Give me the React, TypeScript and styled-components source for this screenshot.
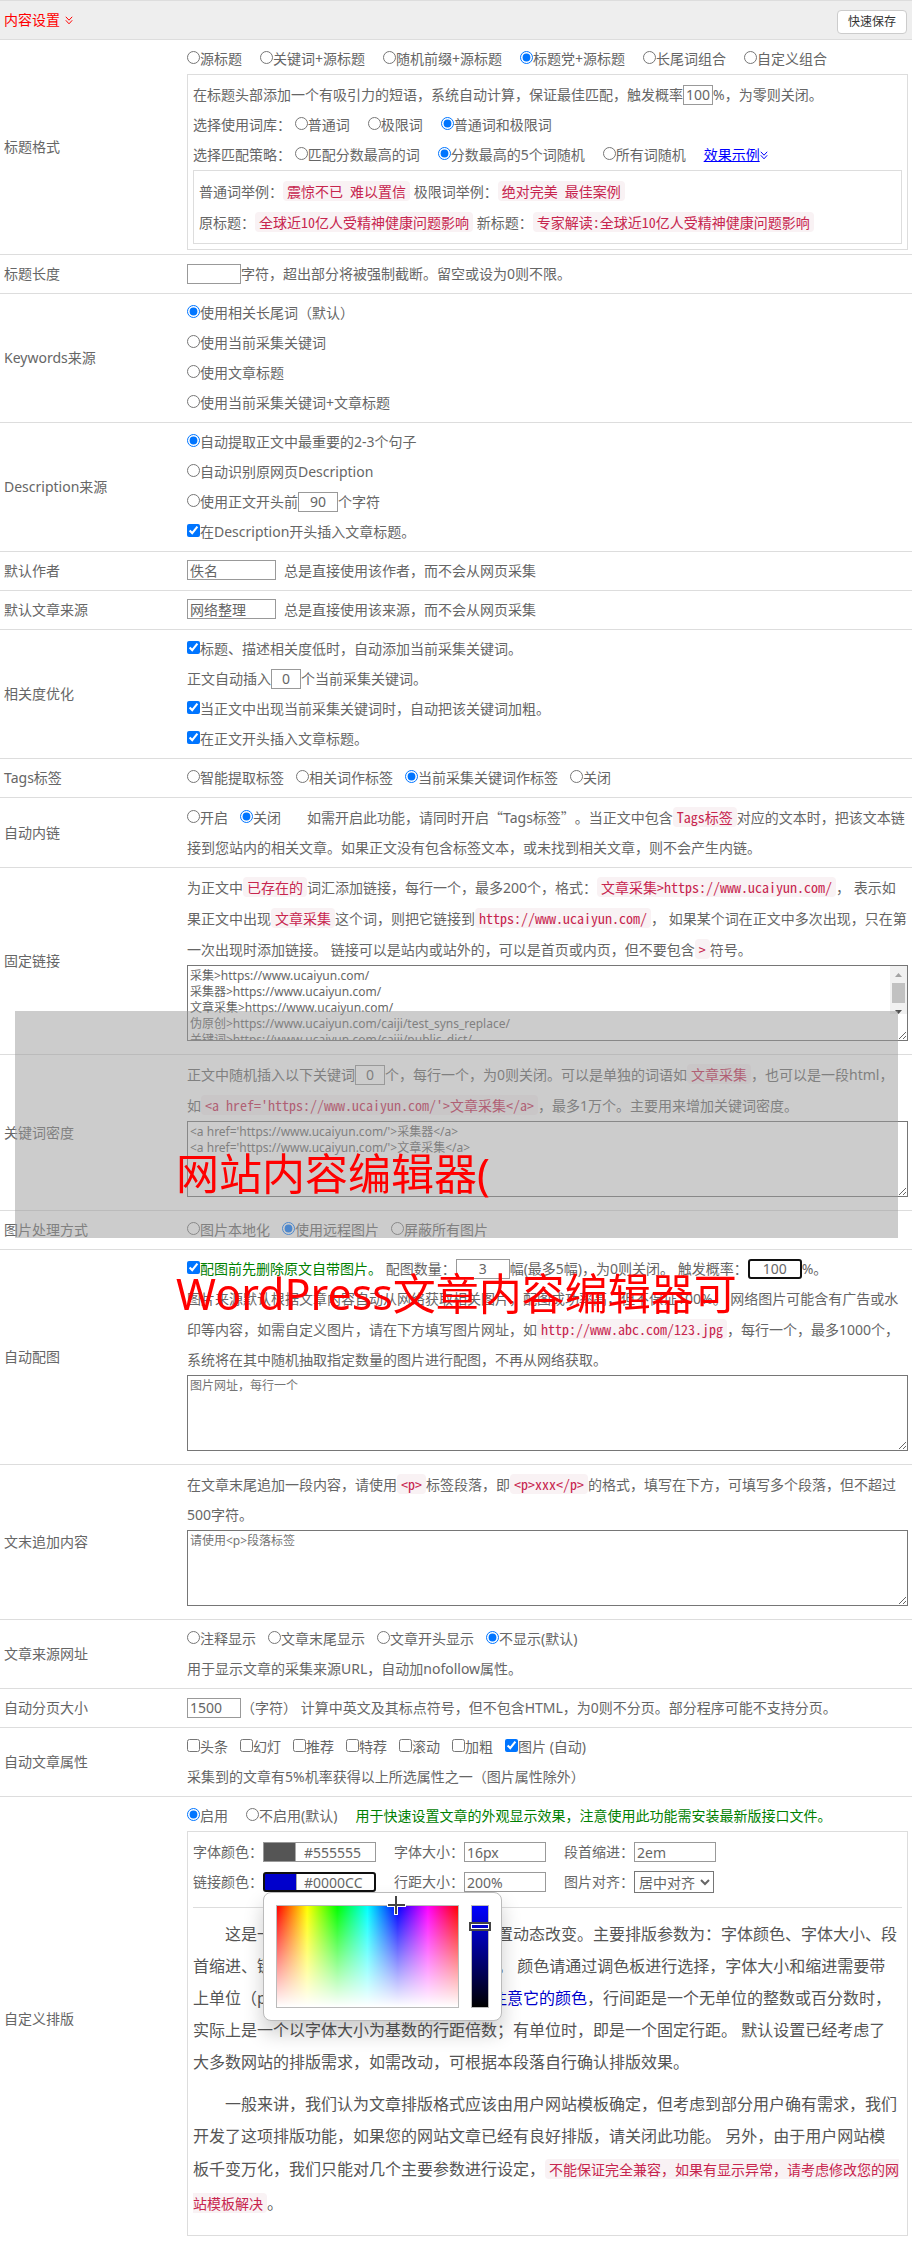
import React, { useId } from 'react';
import styled, { createGlobalStyle, css } from 'styled-components';

const sans = `'Noto Sans', 'Noto Sans CJK SC', sans-serif`;
const mono = `'Noto Sans Mono CJK SC', 'Liberation Mono', 'Noto Sans CJK SC', monospace`;

const GlobalStyle = createGlobalStyle`
  body {
    margin: 0;
    background: #fff;
    color: #666;
    font-family: ${sans};
    font-size: 14px;
    line-height: 30px;
    text-spacing-trim: space-all;
  }
  input, select, button, textarea { font-family: inherit; color: inherit; }
`;

const Page = styled.main`
  position: relative;
  padding-bottom: 10px;
`;

const Header = styled.header`
  display: flex;
  align-items: center;
  justify-content: space-between;
  height: 38px;
  padding: 0 5px 0 4px;
  background: #eee;
  border-top: 1px solid #ddd;
  border-bottom: 1px solid #ddd;
`;

const Title = styled.h1`
  display: flex;
  align-items: center;
  gap: 5px;
  margin: 0;
  font-size: 14px;
  font-weight: 400;
  color: #f00;
`;

const SaveButton = styled.button`
  height: 24px;
  padding: 0 10px;
  margin-top: 4px;
  border: 1px solid #ccc;
  border-radius: 4px;
  background: #fff;
  color: #333;
  font-size: 12px;
  line-height: 22px;
`;

const Row = styled.section<{ $last?: boolean }>`
  display: grid;
  grid-template-columns: 183px minmax(0, 1fr);
  align-items: center;
  padding: 4px 4px 4px 4px;
  border-bottom: ${(p) => (p.$last ? 0 : 1)}px solid #ddd;
`;

const RowName = styled.h2`
  margin: 0;
  font-size: 14px;
  font-weight: 400;
`;

const Line = styled.div``;

const Options = styled.span<{ $gap?: number }>`
  display: inline-flex;
  align-items: baseline;
  gap: ${(p) => p.$gap ?? 12}px;
  margin-right: ${(p) => p.$gap ?? 12}px;
`;

const Tick = styled.input`
  width: 13px;
  height: 13px;
  margin: 0;
  vertical-align: baseline;
`;

const Field = styled.input<{ $w: number; $center?: boolean; $focus?: boolean }>`
  box-sizing: border-box;
  width: ${(p) => p.$w}px;
  height: 20px;
  padding: 0 2px;
  border: 1px solid #999;
  border-radius: 0;
  background: #fff;
  font-size: 14px;
  line-height: 18px;
  text-align: ${(p) => (p.$center ? 'center' : 'left')};
  ${(p) => p.$focus && css`
    border: 2px solid #101010;
    border-radius: 3px;
  `}
`;

const ColorInput = styled(Field)<{ $color: string }>`
  padding-left: ${(p) => (p.$focus ? 39 : 40)}px;
  background: linear-gradient(to right, ${(p) => p.$color} 31px, #aaa 31px, #aaa 32px, #fff 32px);
`;

const Select = styled.select`
  box-sizing: border-box;
  width: 80px;
  height: 22px;
  padding: 0;
  border: 1px solid #767676;
  border-radius: 0;
  background: #fff;
  font-size: 14px;
`;

const Area = styled.textarea<{ $scroll?: boolean }>`
  display: block;
  box-sizing: border-box;
  width: 100%;
  height: 76px;
  margin: 0 0 9px;
  padding: 2px;
  border: 1px solid #767676;
  border-radius: 0;
  background: #fff;
  font-size: 12px;
  line-height: 16px;
  overflow-y: ${(p) => (p.$scroll ? 'scroll' : 'auto')};
  &::placeholder { color: #757575; }
`;

const ScrollFrame = styled.div`
  position: relative;
`;

const ScrollBar = styled.div`
  position: absolute;
  top: 1px;
  right: 1px;
  bottom: 27px;
  display: flex;
  flex-direction: column;
  align-items: center;
  width: 17px;
  background: #f1f1f1;
  pointer-events: none;
`;

const ScrollArrow = styled.svg`
  flex: none;
  width: 17px;
  height: 17px;
`;

const ScrollTrack = styled.div`
  flex: 1;
  width: 13px;
`;

const ScrollThumb = styled.div`
  height: 20px;
  background: #c1c1c1;
`;

const Code = styled.code`
  padding: 0 4px;
  border-radius: 4px;
  background: #f9f2f4;
  color: #c7254e;
  font-family: ${mono};
  font-size: 14px;
`;

const Keep = styled.span`
  white-space: nowrap;
`;

const WideQuotes = styled.q`
  quotes: '“' '”';
  &::before, &::after { font-family: 'Noto Sans CJK SC', sans-serif; }
`;

const Panel = styled.div`
  padding: 5px;
  border: 1px solid #ddd;
`;

const Link = styled.a`
  color: #00f;
`;

const Green = styled.span`
  color: #008000;
`;

const Gap = styled.span<{ $w: number }>`
  display: inline-block;
  width: ${(p) => p.$w}px;
`;

const StyleGrid = styled.div`
  display: grid;
  grid-template-columns: max-content max-content max-content;
  column-gap: 18px;
  padding-bottom: 10px;
  border-bottom: 1px solid #ddd;
  margin-bottom: 10px;
`;

const StyleCell = styled.div`
  display: flex;
  align-items: center;
  height: 30px;
`;

const Anchor = styled.span`
  position: relative;
  display: flex;
`;

const Sample = styled.p`
  margin: 0 0 10px;
  padding-right: 2px;
  color: #555;
  font-size: 16px;
  line-height: 32px;
  text-indent: 2em;

  ${Code} { line-height: 34px; }
`;

const SampleLink = styled.a`
  color: #0000cc;
  text-decoration: none;
`;

const Picker = styled.div`
  position: absolute;
  z-index: 1;
  top: 20px;
  left: 0;
  display: flex;
  gap: 12px;
  box-sizing: border-box;
  width: 239px;
  height: 129px;
  padding: 12px;
  border: 1px solid #bbb;
  border-radius: 8px;
  background: #fff;
  box-shadow: 0 12px 20px rgba(0, 0, 0, 0.2);
`;

const Hues = styled.div`
  position: relative;
  box-sizing: border-box;
  width: 183px;
  height: 103px;
  border: 1px solid #bbb;
  background:
    linear-gradient(to bottom, rgba(255, 255, 255, 0), #fff),
    linear-gradient(to right, #f00, #ff0, #0f0, #0ff, #00f, #f0f, #f00);
`;

const Shade = styled.div`
  position: relative;
  box-sizing: border-box;
  width: 18px;
  height: 103px;
  border: 1px solid #bbb;
  background: linear-gradient(to bottom, #00f, #000);
`;

const Cross = styled.svg`
  position: absolute;
  left: 110px;
  top: -10px;
`;

const Thumb = styled.div`
  position: absolute;
  left: -3px;
  top: 16px;
  box-sizing: border-box;
  width: 22px;
  height: 9px;
  border: 2px solid #444;
  box-shadow: inset 0 0 0 1px #fff;
`;

const Veil = styled.div`
  position: absolute;
  z-index: 2;
  top: 1011px;
  left: 15px;
  right: 14px;
  height: 227px;
  background: rgba(153, 153, 153, 0.5);
  pointer-events: none;
`;

const Caption = styled.p`
  position: absolute;
  z-index: 3;
  top: 1114px;
  left: 176px;
  margin: 0;
  color: #f00;
  font-size: 43px;
  line-height: 120px;
  white-space: nowrap;
  pointer-events: none;
`;

const Chevrons = () => (
  <svg width="8" height="9" viewBox="0 0 8 9" fill="none" stroke="currentColor" aria-hidden="true">
    <path d="M0.8 0.8 4 4.2 7.2 0.8M0.8 4.3 4 7.8 7.2 4.3" />
  </svg>
);

type TickProps = { type?: 'radio' | 'checkbox'; name?: string; on?: boolean; children: React.ReactNode };

const Choice = ({ type = 'radio', name, on, children }: TickProps) => (
  <label>
    <Tick type={type} name={name} defaultChecked={on} />
    {children}
  </label>
);

type ChoicesProps = { name: string; items: string[]; on: number; gap?: number };

const Choices = ({ name, items, on, gap }: ChoicesProps) => (
  <Options $gap={gap}>
    {items.map((item, i) => (
      <Choice key={item} name={name} on={i === on}>{item}</Choice>
    ))}
  </Options>
);

const Setting = ({ name, last, children }: { name: string; last?: boolean; children: React.ReactNode }) => {
  const id = useId();
  return (
    <Row $last={last} aria-labelledby={id}>
      <RowName id={id}>{name}</RowName>
      <div>{children}</div>
    </Row>
  );
};

const fixedLinks = `采集>https://www.ucaiyun.com/
采集器>https://www.ucaiyun.com/
文章采集>https://www.ucaiyun.com/
伪原创>https://www.ucaiyun.com/caiji/test_syns_replace/
关键词>https://www.ucaiyun.com/caiji/public_dict/
文章组合>https://www.ucaiyun.com/
网站采集>https://www.ucaiyun.com/`;

const densityWords = `<a href='https://www.ucaiyun.com/'>采集器</a>
<a href='https://www.ucaiyun.com/'>文章采集</a>`;

export default function App() {
  return (
    <Page>
      <GlobalStyle />
      <Header>
        <Title>内容设置 <Chevrons /></Title>
        <SaveButton type="button">快速保存</SaveButton>
      </Header>

      <Setting name="标题格式">
        <Line>
          <Choices name="title" gap={18} on={3}
            items={['源标题', '关键词+源标题', '随机前缀+源标题', '标题党+源标题', '长尾词组合', '自定义组合']} />
        </Line>
        <Panel>
          <Line>
            <label>在标题头部添加一个有吸引力的短语，系统自动计算，保证最佳匹配，触发概率<Field $w={30} $center defaultValue="100" /></label>%，为零则关闭。
          </Line>
          <Line>选择使用词库： <Choices name="lexicon" gap={18} on={2} items={['普通词', '极限词', '普通词和极限词']} /></Line>
          <Line>
            选择匹配策略： <Choices name="strategy" gap={18} on={1} items={['匹配分数最高的词', '分数最高的5个词随机', '所有词随机']} />
            <Link href="#example">效果示例<Chevrons /></Link>
          </Line>
          <Panel>
            <Line>普通词举例：<Code>震惊不已 难以置信</Code> 极限词举例：<Code>绝对完美 最佳案例</Code></Line>
            <Line>原标题：<Code>全球近10亿人受精神健康问题影响</Code> 新标题：<Code>专家解读:全球近10亿人受精神健康问题影响</Code></Line>
          </Panel>
        </Panel>
      </Setting>

      <Setting name="标题长度">
        <Line><label><Field $w={54} />字符，超出部分将被强制截断。留空或设为0则不限。</label></Line>
      </Setting>

      <Setting name="Keywords来源">
        <Line><Choice name="keywords" on>使用相关长尾词（默认）</Choice></Line>
        <Line><Choice name="keywords">使用当前采集关键词</Choice></Line>
        <Line><Choice name="keywords">使用文章标题</Choice></Line>
        <Line><Choice name="keywords">使用当前采集关键词+文章标题</Choice></Line>
      </Setting>

      <Setting name="Description来源">
        <Line><Choice name="description" on>自动提取正文中最重要的2-3个句子</Choice></Line>
        <Line><Choice name="description">自动识别原网页Description</Choice></Line>
        <Line><Choice name="description">使用正文开头前</Choice><label><Field $w={40} $center defaultValue="90" />个字符</label></Line>
        <Line><Choice type="checkbox" on>在Description开头插入文章标题。</Choice></Line>
      </Setting>

      <Setting name="默认作者">
        <Line><label><Field $w={89} defaultValue="佚名" /><Gap $w={8} />总是直接使用该作者，而不会从网页采集</label></Line>
      </Setting>

      <Setting name="默认文章来源">
        <Line><label><Field $w={89} defaultValue="网络整理" /><Gap $w={8} />总是直接使用该来源，而不会从网页采集</label></Line>
      </Setting>

      <Setting name="相关度优化">
        <Line><Choice type="checkbox" on>标题、描述相关度低时，自动添加当前采集关键词。</Choice></Line>
        <Line><label>正文自动插入<Field $w={30} $center defaultValue="0" />个当前采集关键词。</label></Line>
        <Line><Choice type="checkbox" on>当正文中出现当前采集关键词时，自动把该关键词加粗。</Choice></Line>
        <Line><Choice type="checkbox" on>在正文开头插入文章标题。</Choice></Line>
      </Setting>

      <Setting name="Tags标签">
        <Line><Choices name="tags" on={2} items={['智能提取标签', '相关词作标签', '当前采集关键词作标签', '关闭']} /></Line>
      </Setting>

      <Setting name="自动内链">
        <Line>
          <Choices name="inner-link" on={1} items={['开启', '关闭']} /><Gap $w={14} />如需开启此功能，请同时开启<WideQuotes>Tags标签</WideQuotes>。当正文中包含<Code>Tags标签</Code>对应的文本时，把该文本链接到您站内的相关文章。如果正文没有包含标签文本，或未找到相关文章，则不会产生内链。
        </Line>
      </Setting>

      <Setting name="固定链接">
        <Line>
          为正文中<Code>已存在的</Code>词汇添加链接，每行一个，最多200个，格式：<Code>文章采集&gt;https://www.ucaiyun.com/</Code>， 表示如果正文中出现<Code>文章采集</Code>这个词，则把它链接到<Code>https://www.ucaiyun.com/</Code>， 如果某个词在正文中多次出现，只在第一次出现时添加链接。 链接可以是站内或站外的，可以是首页或内页，但不要包含<Code>&gt;</Code>符号。
        </Line>
        <ScrollFrame>
          <Area $scroll aria-label="固定链接" defaultValue={fixedLinks} />
          <ScrollBar aria-hidden="true">
            <ScrollArrow viewBox="0 0 17 17"><path d="M5 11 8.5 7 12 11Z" fill="#a3a3a3" /></ScrollArrow>
            <ScrollTrack><ScrollThumb /></ScrollTrack>
            <ScrollArrow viewBox="0 0 17 17"><path d="M5 7 8.5 11 12 7Z" fill="#505050" /></ScrollArrow>
          </ScrollBar>
        </ScrollFrame>
      </Setting>

      <Setting name="关键词密度">
        <Line>
          正文中随机插入以下关键词<Field $w={30} $center aria-label="关键词数量" defaultValue="0" />个，每行一个，为0则关闭。可以是单独的词语如<Code>文章采集</Code>，也可以是一段html，<Keep>如<Code>&lt;a href='https://www.ucaiyun.com/'&gt;文章采集&lt;/a&gt;</Code></Keep>，最多1万个。主要用来增加关键词密度。
        </Line>
        <Area aria-label="关键词密度" defaultValue={densityWords} />
      </Setting>

      <Setting name="图片处理方式">
        <Line><Choices name="image" on={1} items={['图片本地化', '使用远程图片', '屏蔽所有图片']} /></Line>
      </Setting>

      <Setting name="自动配图">
        <Line>
          <Choice type="checkbox" on><Green>配图前先删除原文自带图片。</Green></Choice> <label>配图数量：<Field $w={54} $center defaultValue="3" /></label>幅(最多5幅)，为0则关闭。 <label>触发概率：<Field $w={54} $center $focus defaultValue="100" /></label>%。
        </Line>
        <Line>
          图片来源默认根据文章内容自动从网络获取相关图片，配图成功率高，但不保证100%。 网络图片可能含有广告或水印等内容，如需自定义图片，请在下方填写图片网址，如<Code>http://www.abc.com/123.jpg</Code>，每行一个，最多1000个，系统将在其中随机抽取指定数量的图片进行配图，不再从网络获取。
        </Line>
        <Area aria-label="自动配图" placeholder="图片网址，每行一个" />
      </Setting>

      <Setting name="文末追加内容">
        <Line>
          在文章末尾追加一段内容，请使用<Code>&lt;p&gt;</Code>标签段落，即<Code>&lt;p&gt;xxx&lt;/p&gt;</Code>的格式，填写在下方，可填写多个段落，但不超过500字符。
        </Line>
        <Area aria-label="文末追加内容" placeholder="请使用<p>段落标签" />
      </Setting>

      <Setting name="文章来源网址">
        <Line><Choices name="source" on={3} items={['注释显示', '文章末尾显示', '文章开头显示', '不显示(默认)']} /></Line>
        <Line>用于显示文章的采集来源URL，自动加nofollow属性。</Line>
      </Setting>

      <Setting name="自动分页大小">
        <Line><label><Field $w={54} defaultValue="1500" />（字符） 计算中英文及其标点符号，但不包含HTML，为0则不分页。部分程序可能不支持分页。</label></Line>
      </Setting>

      <Setting name="自动文章属性">
        <Line>
          <Options>
            {['头条', '幻灯', '推荐', '特荐', '滚动', '加粗'].map((item) => (
              <Choice key={item} type="checkbox">{item}</Choice>
            ))}
            <Choice type="checkbox" on>图片 (自动)</Choice>
          </Options>
        </Line>
        <Line>采集到的文章有5%机率获得以上所选属性之一（图片属性除外）</Line>
      </Setting>

      <Setting name="自定义排版" last>
        <Line>
          <Choices name="layout" gap={18} on={0} items={['启用', '不启用(默认)']} />
          <Green>用于快速设置文章的外观显示效果，注意使用此功能需安装最新版接口文件。</Green>
        </Line>
        <Panel>
          <StyleGrid>
            <StyleCell><label htmlFor="font-color">字体颜色：</label><ColorInput id="font-color" $w={113} $color="#555" defaultValue="#555555" /></StyleCell>
            <StyleCell><label htmlFor="font-size">字体大小：</label><Field id="font-size" $w={82} defaultValue="16px" /></StyleCell>
            <StyleCell><label htmlFor="indent">段首缩进：</label><Field id="indent" $w={82} defaultValue="2em" /></StyleCell>
            <StyleCell>
              <label htmlFor="link-color">链接颜色：</label>
              <Anchor>
                <ColorInput id="link-color" $w={113} $focus $color="#00c" defaultValue="#0000CC" />
                <Picker>
                  <Hues>
                    <Cross width="19" height="19" viewBox="0 0 19 19" fill="none" aria-hidden="true">
                      <path d="M9 0V19M0 9H19" stroke="#fff" strokeWidth="4" />
                      <path d="M9 0V18M1 9H18" stroke="#444" strokeWidth="2" />
                    </Cross>
                  </Hues>
                  <Shade><Thumb /></Shade>
                </Picker>
              </Anchor>
            </StyleCell>
            <StyleCell><label htmlFor="leading">行距大小：</label><Field id="leading" $w={82} defaultValue="200%" /></StyleCell>
            <StyleCell>
              <label htmlFor="align">图片对齐：</label>
              <Select id="align"><option>居中对齐</option><option>居左对齐</option><option>居右对齐</option></Select>
            </StyleCell>
          </StyleGrid>
          <Sample>
            这是一段示例文字，它会随您的上述设置动态改变。主要排版参数为：字体颜色、字体大小、段首缩进、链接颜色、行距大小以及图片对齐。 颜色请通过调色板进行选择，字体大小和缩进需要带上单位（px或em），这里是一个链接，请<SampleLink href="#color">注意它的颜色</SampleLink>，行间距是一个无单位的整数或百分数时，实际上是一个以字体大小为基数的行距倍数；有单位时，即是一个固定行距。 默认设置已经考虑了大多数网站的排版需求，如需改动，可根据本段落自行确认排版效果。
          </Sample>
          <Sample>
            一般来讲，我们认为文章排版格式应该由用户网站模板确定，但考虑到部分用户确有需求，我们开发了这项排版功能，如果您的网站文章已经有良好排版，请关闭此功能。 另外，由于用户网站模板千变万化，我们只能对几个主要参数进行设定，<Code>不能保证完全兼容，如果有显示异常，请考虑修改您的网站模板解决</Code>。
          </Sample>
        </Panel>
      </Setting>

      <Veil />
      <Caption>网站内容编辑器(<br />WordPress文章内容编辑器可</Caption>
    </Page>
  );
}
